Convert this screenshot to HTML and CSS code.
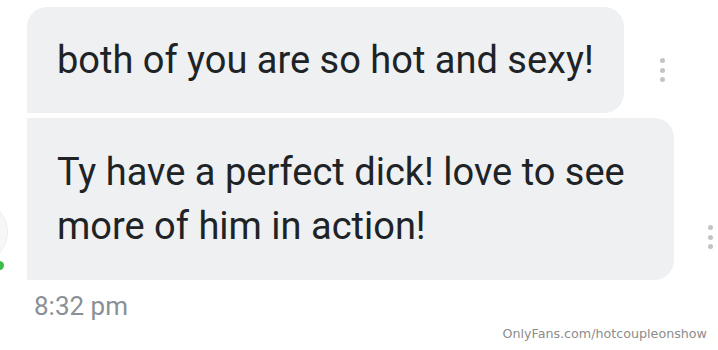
FILE: index.html
```html
<!DOCTYPE html>
<html lang="en">
  <head>
    <meta charset="UTF-8" />
    <meta name="viewport" content="width=device-width, initial-scale=1.0" />
    <title>Messages</title>
    <link rel="stylesheet" href="styles.css">
  </head>
  <body>
    <section class="chat">
      <div class="thread">
        <div class="side">
          <div class="avatar"><span class="online"></span></div>
        </div>
        <div class="messages">
          <div class="row">
            <div class="bubble first">both of you are so hot and sexy!</div>
            <div class="more"><i></i><i></i><i></i></div>
          </div>
          <div class="row">
            <div class="bubble last">Ty have a perfect dick! love to see more of him in action!</div>
            <div class="more"><i></i><i></i><i></i></div>
          </div>
        </div>
      </div>
      <div class="time">8:32 pm</div>
    </section>
    <div class="watermark">OnlyFans.com/hotcoupleonshow</div>
  </body>
</html>
```

FILE: styles.css
```css
body {
  margin: 0;
  background: #fff;
  font-family: Roboto, "Liberation Sans", sans-serif;
  overflow: hidden;
}

.chat {
  padding-top: 7px;
}

.thread {
  display: flex;
  align-items: flex-end;
}

.side {
  width: 27px;
  flex: none;
  display: flex;
  justify-content: flex-end;
  padding-bottom: 18px;
}

.avatar {
  position: relative;
  flex: none;
  width: 60px;
  height: 60px;
  margin-right: 20px;
  border-radius: 50%;
  background: #f6f7f8;
  box-shadow: 0 0 0 1px #eceeef;
}

.online {
  position: absolute;
  right: 3px;
  bottom: -8px;
  width: 9px;
  height: 9px;
  border-radius: 50%;
  background: #3dbb4b;
}

.messages {
  display: flex;
  flex-direction: column;
  gap: 5px;
}

.row {
  display: flex;
  align-items: flex-end;
}

.bubble {
  box-sizing: border-box;
  max-width: 647px;
  padding: 26px 30px;
  background: #eef0f1;
  color: #202326;
  font-size: 38px;
  line-height: 54px;
}

.bubble.first {
  border-radius: 20px 20px 20px 0;
}

.bubble.last {
  border-radius: 0 20px 20px 0;
  padding: 27px 30px;
}

.more {
  width: 20px;
  margin: 0 0 31px 29px;
  display: flex;
  flex-direction: column;
  align-items: center;
  gap: 4.5px;
}

.more i {
  width: 5px;
  height: 5px;
  border-radius: 50%;
  background: #c2c5c8;
}

.time {
  margin-top: 11px;
  padding-left: 34px;
  color: #8a9095;
  font-size: 26px;
  line-height: 30px;
}

.watermark {
  position: absolute;
  right: 11px;
  bottom: 9px;
  color: #8c8c8c;
  font-family: "DejaVu Sans", sans-serif;
  font-size: 12.7px;
}
```
